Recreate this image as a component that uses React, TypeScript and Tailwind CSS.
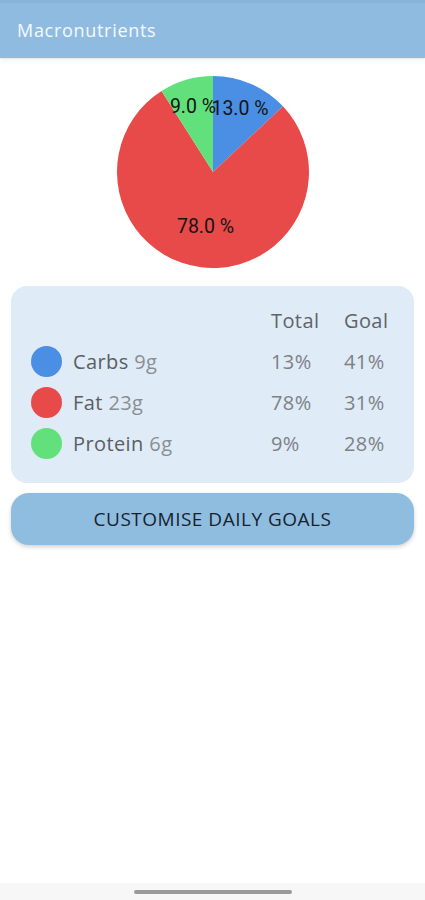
import React from 'react';

type Macro = {
  name: string;
  grams: string;
  total: string;
  goal: string;
  dot: string;
};

const macros: Macro[] = [
  { name: 'Carbs', grams: '9g', total: '13%', goal: '41%', dot: 'bg-[#4a8fe3]' },
  { name: 'Fat', grams: '23g', total: '78%', goal: '31%', dot: 'bg-[#e84a4a]' },
  { name: 'Protein', grams: '6g', total: '9%', goal: '28%', dot: 'bg-[#62e07c]' },
];

// pie: 13% carbs, 78% fat, 9% protein — clockwise from 12 o'clock
const MacroPie: React.FC = () => (
  <svg width="192" height="192" viewBox="0 0 192 192" className="block">
    <path d="M96 96 L96 0 A96 96 0 0 1 165.98 30.29 Z" fill="#4a8fe3" />
    <path d="M96 96 L165.98 30.29 A96 96 0 1 1 44.56 14.95 Z" fill="#e84a4a" />
    <path d="M96 96 L44.56 14.95 A96 96 0 0 1 96 0 Z" fill="#62e07c" />
    <g fontFamily="Roboto, 'Liberation Sans', sans-serif" fontSize="19.5" fill="#151515" textAnchor="middle">
      <text x="76" y="37">9.0 %</text>
      <text x="123" y="39">13.0 %</text>
      <text x="88.5" y="157">78.0 %</text>
    </g>
  </svg>
);

export default function App() {
  return (
    <div className="min-h-[900px] flex flex-col bg-white font-['Open_Sans','Noto_Sans',sans-serif]">
      {/* top bar */}
      <header className="h-[58px] flex items-center px-[17px] bg-[#8fbbe0] border-t-[3px] border-[#85b3da] shadow-[0_1px_3px_rgba(0,0,0,0.12)]">
        <h1 className="text-[18px] tracking-[0.7px] text-white/90">Macronutrients</h1>
      </header>

      <div className="flex justify-center mt-[18px]">
        <MacroPie />
      </div>

      {/* breakdown table */}
      <div className="mx-[11px] mt-[18px] rounded-[16px] bg-[#dfebf6] pt-[14px] pb-[19px] pl-[20px] pr-[20px]">
        <div className="grid grid-cols-[1fr_73px_50px] auto-rows-[41px] items-center text-[20px] tracking-[0.4px]">
          <div />
          <div className="text-[#5f6368]">Total</div>
          <div className="text-[#5f6368]">Goal</div>
          {macros.map(m => (
            <React.Fragment key={m.name}>
              <div className="flex items-center gap-[11px]">
                <span className={`w-[31px] h-[31px] rounded-full ${m.dot}`} />
                <span className="text-[#5a5e63]">
                  {m.name} <span className="text-[#8a8e93]">{m.grams}</span>
                </span>
              </div>
              <div className="text-[#7d8186]">{m.total}</div>
              <div className="text-[#7d8186]">{m.goal}</div>
            </React.Fragment>
          ))}
        </div>
      </div>

      <button className="mx-[11px] mt-[10px] h-[52px] rounded-[18px] bg-[#8fbde0] shadow-[0_2px_4px_rgba(0,0,0,0.18)] text-[19px] tracking-[0.5px] text-[#18222d] uppercase">
        Customise daily goals
      </button>

      {/* gesture bar */}
      <div className="mt-auto h-[17px] bg-[#f7f7f7] flex justify-center pt-[7px]">
        <div className="w-[158px] h-[4px] rounded-full bg-[#9a9a9a]" />
      </div>
    </div>
  );
}
